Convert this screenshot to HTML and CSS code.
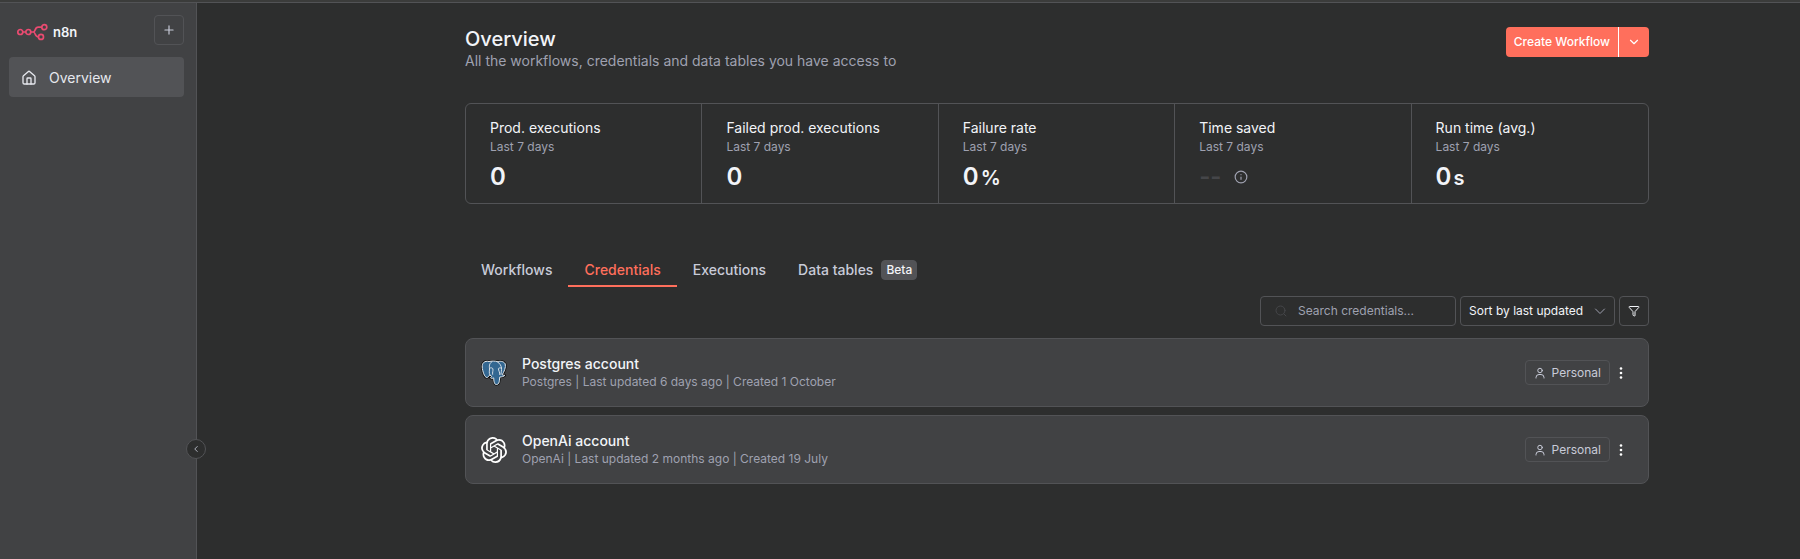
FILE: index.html
```html
<!DOCTYPE html>
<html lang="en">
<head>
<meta charset="utf-8">
<meta name="viewport" content="width=device-width, initial-scale=1">
<title>Overview - n8n</title>
<link rel="stylesheet" href="styles.css">
</head>
<body>
<div class="app">
  <aside class="sidebar">
    <div class="sidebar-head">
      <a class="logo" href="#">
        <svg class="logo-mark" viewBox="0 0 31 18" aria-hidden="true">
          <g fill="none" stroke="#ea4b71" stroke-width="1.7">
            <circle cx="3.3" cy="9" r="2.5"/>
            <circle cx="11.3" cy="9" r="2.5"/>
            <circle cx="27.3" cy="4.2" r="2.5"/>
            <circle cx="24" cy="13.9" r="2.5"/>
            <path d="M5.8 9h3M13.800 9h2.400c2.600 0 1.300-4.800 5-4.800h3.600M16.200 9c2.600 0 1.200 4.900 5.300 4.900"/>
          </g>
        </svg>
        <span>n8n</span>
      </a>
      <button class="icon-button" type="button" aria-label="Add">
        <svg class="icon" viewBox="0 0 24 24"><path d="M5 12h14M12 5v14"/></svg>
      </button>
    </div>
    <nav>
      <a class="nav-item" href="#" aria-current="page">
        <svg class="icon" viewBox="0 0 24 24"><path d="M15 21v-8a1 1 0 0 0-1-1h-4a1 1 0 0 0-1 1v8"/><path d="M3 10a2 2 0 0 1 .709-1.528l7-5.999a2 2 0 0 1 2.582 0l7 5.999A2 2 0 0 1 21 10v9a2 2 0 0 1-2 2H5a2 2 0 0 1-2-2z"/></svg>
        Overview
      </a>
    </nav>
    <button class="collapse" type="button" aria-label="Collapse sidebar">
      <svg class="icon" viewBox="0 0 24 24"><path d="m15 18-6-6 6-6"/></svg>
    </button>
  </aside>

  <main class="main">
    <div class="content">
      <header class="page-head">
        <div>
          <h1>Overview</h1>
          <p>All the workflows, credentials and data tables you have access to</p>
        </div>
        <div class="split-button">
          <button type="button">Create Workflow</button>
          <button class="split-toggle" type="button" aria-label="More create options">
            <svg class="icon" viewBox="0 0 24 24"><path d="m6 9 6 6 6-6"/></svg>
          </button>
        </div>
      </header>

      <ul class="stats">
        <li><h2>Prod. executions</h2><p>Last 7 days</p><div class="value">0</div></li>
        <li><h2>Failed prod. executions</h2><p>Last 7 days</p><div class="value">0</div></li>
        <li><h2>Failure rate</h2><p>Last 7 days</p><div class="value">0<span class="unit">%</span></div></li>
        <li><h2>Time saved</h2><p>Last 7 days</p><div class="value"><span class="empty">--</span>
          <svg class="icon info" viewBox="0 0 24 24"><circle cx="12" cy="12" r="10"/><path d="M12 16v-4M12 8h.01"/></svg></div></li>
        <li><h2>Run time (avg.)</h2><p>Last 7 days</p><div class="value">0<span class="unit">s</span></div></li>
      </ul>

      <nav class="tabs">
        <a href="#">Workflows</a>
        <a class="active" href="#" aria-current="page">Credentials</a>
        <a href="#">Executions</a>
        <a href="#">Data tables <span class="beta">Beta</span></a>
      </nav>

      <div class="toolbar">
        <label class="search">
          <svg class="icon" viewBox="0 0 24 24"><circle cx="11" cy="11" r="9"/><path d="m22 22-4.500-4.500"/></svg>
          <input type="text" placeholder="Search credentials..." aria-label="Search credentials">
        </label>
        <div class="sort">
          <select aria-label="Sort"><option>Sort by last updated</option></select>
          <svg class="icon" viewBox="0 0 24 24"><path d="m3 8 9 9 9-9"/></svg>
        </div>
        <button class="icon-button filter" type="button" aria-label="Filter">
          <svg class="icon" viewBox="0 0 24 24"><path d="M10 20a1 1 0 0 0 .553.895l2 1A1 1 0 0 0 14 21v-7a2 2 0 0 1 .517-1.341L21.74 4.67A1 1 0 0 0 21 3H3a1 1 0 0 0-.742 1.67l7.225 7.989A2 2 0 0 1 10 14z"/></svg>
        </button>
      </div>

      <div class="cards">
        <article class="card">
          <svg class="brand" viewBox="0 0 26 26" aria-hidden="true">
            <g stroke="#101112" stroke-width="2.500" stroke-linejoin="round">
              <path d="M8 1.500C3.500.5 1 3 1.200 7c.3 4 2.300 10.500 4.600 10.500 1.200 0 2-1.500 3-2.500l1.700 1c.5 1-1 1.300-1 1.800 1 .9 2.300.5 3.200.1.200 2.600.2 6.600 2.700 6.600 2.300 0 2.800-1.900 3-4.300l.4-3.200c1.800 0 4-.4 5-1.600-.8-.4-2 0-2.600-.6C23 12 25.200 7 24.200 3.800 22.500 1 19 1 16.800 1.700 14 .8 10.500 1 8 1.500z"/>
            </g>
            <path fill="#336791" stroke="#e4e8ec" stroke-width="1" stroke-linejoin="round" d="M8 1.500C3.500.5 1 3 1.200 7c.3 4 2.300 10.500 4.600 10.500 1.200 0 2-1.500 3-2.500l1.700 1c.5 1-1 1.300-1 1.800 1 .9 2.300.5 3.200.1.200 2.600.2 6.600 2.700 6.600 2.300 0 2.800-1.900 3-4.300l.4-3.200c1.800 0 4-.4 5-1.600-.8-.4-2 0-2.600-.6C23 12 25.200 7 24.200 3.800 22.500 1 19 1 16.800 1.700 14 .8 10.500 1 8 1.500z"/>
            <path fill="none" stroke="#e4e8ec" stroke-width=".9" stroke-linecap="round" stroke-linejoin="round" d="M10.500 2C8 3.500 8.300 6.500 8.500 8.500c.2 2-.9 4.500.4 6.500M8.500 8.300c1.200-.9 3-.6 3.400.6.400 1.800-.7 3.600-.3 5.400M16.500 1.900c2.500 1.500 3.800 4 4 6.300-1.200-.5-3-.4-3.100.6.100 1.700 1.500 3.300 1.400 5.800M20.500 8.200c.3 2-.4 4.200-.5 6"/>
          </svg>
          <div class="card-text">
            <h2>Postgres account</h2>
            <p>Postgres | Last updated 6 days ago | Created 1 October</p>
          </div>
          <span class="owner">
            <svg class="icon" viewBox="0 0 24 24"><circle cx="12" cy="7" r="4.500"/><path d="M20 22v-1a6 6 0 0 0-6-6h-4a6 6 0 0 0-6 6v1"/></svg>
            Personal
          </span>
          <button class="more" type="button" aria-label="Postgres account actions">
            <svg viewBox="0 0 4 12"><circle cx="2" cy="1.500" r="1.300"/><circle cx="2" cy="6" r="1.300"/><circle cx="2" cy="10.500" r="1.300"/></svg>
          </button>
        </article>
        <article class="card">
          <svg class="brand" viewBox="0 0 24 24" aria-hidden="true"><path fill="#fff" d="M22.2819 9.8211a5.9847 5.9847 0 0 0-.5157-4.9108 6.0462 6.0462 0 0 0-6.5098-2.9A6.0651 6.0651 0 0 0 4.9807 4.1818a5.9847 5.9847 0 0 0-3.9977 2.9 6.0462 6.0462 0 0 0 .7427 7.0966 5.98 5.98 0 0 0 .511 4.9107 6.051 6.051 0 0 0 6.5146 2.9001A5.9847 5.9847 0 0 0 13.2599 24a6.0557 6.0557 0 0 0 5.7718-4.2058 5.9894 5.9894 0 0 0 3.9977-2.9001 6.0557 6.0557 0 0 0-.7475-7.0729zm-9.022 12.6081a4.4755 4.4755 0 0 1-2.8764-1.0408l.1419-.0804 4.7783-2.7582a.7948.7948 0 0 0 .3927-.6813v-6.7369l2.02 1.1686a.071.071 0 0 1 .038.052v5.5826a4.504 4.504 0 0 1-4.4945 4.4944zm-9.6607-4.1254a4.4708 4.4708 0 0 1-.5346-3.0137l.142.0852 4.783 2.7582a.7712.7712 0 0 0 .7806 0l5.8428-3.3685v2.3324a.0804.0804 0 0 1-.0332.0615L9.74 19.9502a4.4992 4.4992 0 0 1-6.1408-1.6464zM2.3408 7.8956a4.485 4.485 0 0 1 2.3655-1.9728V11.6a.7664.7664 0 0 0 .3879.6765l5.8144 3.3543-2.0201 1.1685a.0757.0757 0 0 1-.071 0l-4.8303-2.7865A4.504 4.504 0 0 1 2.3408 7.872zm16.5963 3.8558L13.1038 8.364 15.1192 7.2a.0757.0757 0 0 1 .071 0l4.8303 2.7913a4.4944 4.4944 0 0 1-.6765 8.1042v-5.6772a.79.79 0 0 0-.407-.667zm2.0107-3.0231l-.142-.0852-4.7735-2.7818a.7759.7759 0 0 0-.7854 0L9.409 9.2297V6.8974a.0662.0662 0 0 1 .0284-.0615l4.8303-2.7866a4.4992 4.4992 0 0 1 6.6802 4.66zM8.3065 12.863l-2.02-1.1638a.0804.0804 0 0 1-.038-.0567V6.0742a4.4992 4.4992 0 0 1 7.3757-3.4537l-.142.0805L8.704 5.459a.7948.7948 0 0 0-.3927.6813zm1.0976-2.3654l2.602-1.4998 2.6069 1.4998v2.9994l-2.5974 1.4997-2.6067-1.4997Z"/></svg>
          <div class="card-text">
            <h2>OpenAi account</h2>
            <p>OpenAi | Last updated 2 months ago | Created 19 July</p>
          </div>
          <span class="owner">
            <svg class="icon" viewBox="0 0 24 24"><circle cx="12" cy="7" r="4.500"/><path d="M20 22v-1a6 6 0 0 0-6-6h-4a6 6 0 0 0-6 6v1"/></svg>
            Personal
          </span>
          <button class="more" type="button" aria-label="OpenAi account actions">
            <svg viewBox="0 0 4 12"><circle cx="2" cy="1.500" r="1.300"/><circle cx="2" cy="6" r="1.300"/><circle cx="2" cy="10.500" r="1.300"/></svg>
          </button>
        </article>
      </div>
    </div>
  </main>
</div>
</body>
</html>
```

FILE: styles.css
```css
:root {
  --bg: #2d2e2e;
  --panel: #414244;
  --line: #525356;
  --dim: #454649;
  --text: #f2f4f8;
  --soft: #c8cbd8;
  --muted: #9fa1b0;
  --accent: #ff6f5c;
}

* { box-sizing: border-box; }

body {
  margin: 0;
  background: var(--bg);
  color: var(--text);
  font: 14px/20px Inter, "Liberation Sans", sans-serif;
}

h1, h2, p, ul { margin: 0; padding: 0; }
ul { list-style: none; }
a { color: inherit; text-decoration: none; }
button, input, select { font: inherit; color: inherit; }
button { cursor: pointer; padding: 0; }

.icon {
  width: 16px;
  height: 16px;
  flex: none;
  fill: none;
  stroke: currentColor;
  stroke-width: 2;
  stroke-linecap: round;
  stroke-linejoin: round;
}

.app {
  display: grid;
  grid-template-columns: 197px minmax(0, 1fr);
  min-height: 100vh;
  border-top: 2px solid #3b3c3b;
}

.sidebar {
  position: relative;
  padding: 12px 12px 12px 9px;
  background: var(--panel);
  border-top: 1px solid var(--line);
  border-right: 1px solid var(--line);
}

.sidebar-head {
  display: flex;
  align-items: center;
  justify-content: space-between;
  margin-bottom: 12px;
  padding-left: 8px;
}

.logo {
  display: flex;
  align-items: center;
  gap: 5px;
  padding-top: 4px;
  font-size: 13px;
  font-weight: 600;
}

.logo-mark { width: 31px; height: 18px; }

.icon-button {
  display: grid;
  place-items: center;
  width: 30px;
  height: 30px;
  background: none;
  border: 1px solid var(--line);
  border-radius: 4px;
}

.sidebar .icon-button { color: var(--soft); }
.sidebar .icon-button .icon { width: 14px; height: 14px; }

.nav-item {
  display: flex;
  align-items: center;
  gap: 12px;
  padding: 11px 12px 9px;
  border-radius: 4px;
  background: var(--line);
  color: #e6e8ee;
}

.collapse {
  position: absolute;
  right: -10px;
  bottom: 100px;
  display: grid;
  place-items: center;
  width: 20px;
  height: 20px;
  border: 1px solid var(--line);
  border-radius: 50%;
  background: var(--bg);
  color: var(--soft);
}

.collapse .icon { width: 10px; height: 10px; }

.main {
  display: grid;
  grid-template-columns: minmax(24px, 268fr) minmax(0, 1184px) minmax(24px, 151fr);
  align-content: start;
  padding: 24px 0;
  border-top: 1px solid var(--line);
}

.content { grid-column: 2; }

.page-head {
  display: flex;
  align-items: flex-start;
  justify-content: space-between;
  margin-bottom: 32px;
}

.page-head h1 { font-size: 20px; line-height: 24px; font-weight: 500; }
.page-head p { color: var(--muted); }

.split-button {
  display: flex;
  height: 30px;
  border-radius: 4px;
  overflow: hidden;
}

.split-button button {
  border: 0;
  padding: 0 8px;
  background: var(--accent);
  color: #fff;
  font-size: 12px;
  font-weight: 500;
}

.split-button .split-toggle {
  display: grid;
  place-items: center;
  width: 31px;
  padding: 0;
  border-left: 1px solid #fff;
}

.split-toggle .icon { width: 14px; height: 14px; }

.stats {
  display: grid;
  grid-template-columns: repeat(5, 1fr);
  margin-bottom: 50px;
  border: 1px solid var(--line);
  border-radius: 6px;
}

.stats li { padding: 14px 24px 9px; border-right: 1px solid var(--line); }
.stats li:last-child { border-right: 0; }
.stats h2 { font-size: 14px; font-weight: 400; }
.stats p { color: var(--muted); font-size: 12px; line-height: 18px; }

.value {
  display: flex;
  align-items: baseline;
  gap: 2px;
  margin-top: 5px;
  font-size: 24px;
  line-height: 32px;
  font-weight: 600;
}

.unit { font-size: 20px; }
.empty { color: var(--dim); }
.info { width: 14px; height: 14px; align-self: center; margin-left: 10px; color: var(--muted); }

.tabs { display: flex; color: var(--soft); font-weight: 500; }

.tabs a {
  display: flex;
  align-items: center;
  gap: 8px;
  height: 33px;
  padding: 0 16px;
  border-bottom: 2px solid transparent;
}

.tabs .active { color: var(--accent); border-color: var(--accent); }

.beta {
  padding: 0 4px;
  border: 1px solid var(--line);
  border-radius: 4px;
  background: var(--line);
  color: var(--text);
  font-size: 12px;
  line-height: 18px;
}

.toolbar {
  display: flex;
  justify-content: flex-end;
  gap: 4px;
  margin: 9px 0 12px;
  font-size: 12px;
}

.search {
  display: flex;
  align-items: center;
  gap: 11px;
  width: 196px;
  height: 30px;
  padding: 0 12px 0 14px;
  border: 1px solid var(--line);
  border-radius: 4px;
}

.search .icon { width: 12px; height: 12px; color: var(--dim); }

.search input {
  width: 100%;
  min-width: 0;
  padding: 0;
  border: 0;
  outline: 0;
  background: none;
}

.search input::placeholder { color: var(--muted); opacity: 1; }

.sort { display: grid; align-items: center; width: 155px; }
.sort > * { grid-area: 1 / 1; }

.sort select {
  width: 100%;
  height: 30px;
  padding: 0 8px;
  appearance: none;
  border: 1px solid var(--line);
  border-radius: 4px;
  background: none;
}

.sort .icon {
  width: 12px;
  height: 12px;
  margin-right: 9px;
  justify-self: end;
  color: var(--muted);
  pointer-events: none;
}

.filter .icon { width: 12px; height: 12px; }

.cards { display: grid; gap: 8px; }

.card {
  display: flex;
  align-items: center;
  padding: 15px 17px 15px 15px;
  border: 1px solid var(--line);
  border-radius: 8px;
  background: var(--panel);
}

.brand { width: 26px; height: 26px; flex: none; margin-right: 15px; }
.card-text { flex: 1; min-width: 0; }
.card h2 { font-size: 14px; line-height: 19px; font-weight: 500; }
.card p { color: var(--muted); font-size: 12px; line-height: 18px; }

.owner {
  display: flex;
  align-items: center;
  gap: 6px;
  height: 25px;
  padding: 0 8px;
  border: 1px solid var(--line);
  border-radius: 4px;
  color: var(--soft);
  font-size: 12px;
}

.owner .icon { width: 12px; height: 12px; }

.more {
  display: grid;
  place-items: center;
  width: 21px;
  height: 24px;
  border: 0;
  background: none;
}

.more svg { width: 4px; height: 12px; fill: #fff; }
```
